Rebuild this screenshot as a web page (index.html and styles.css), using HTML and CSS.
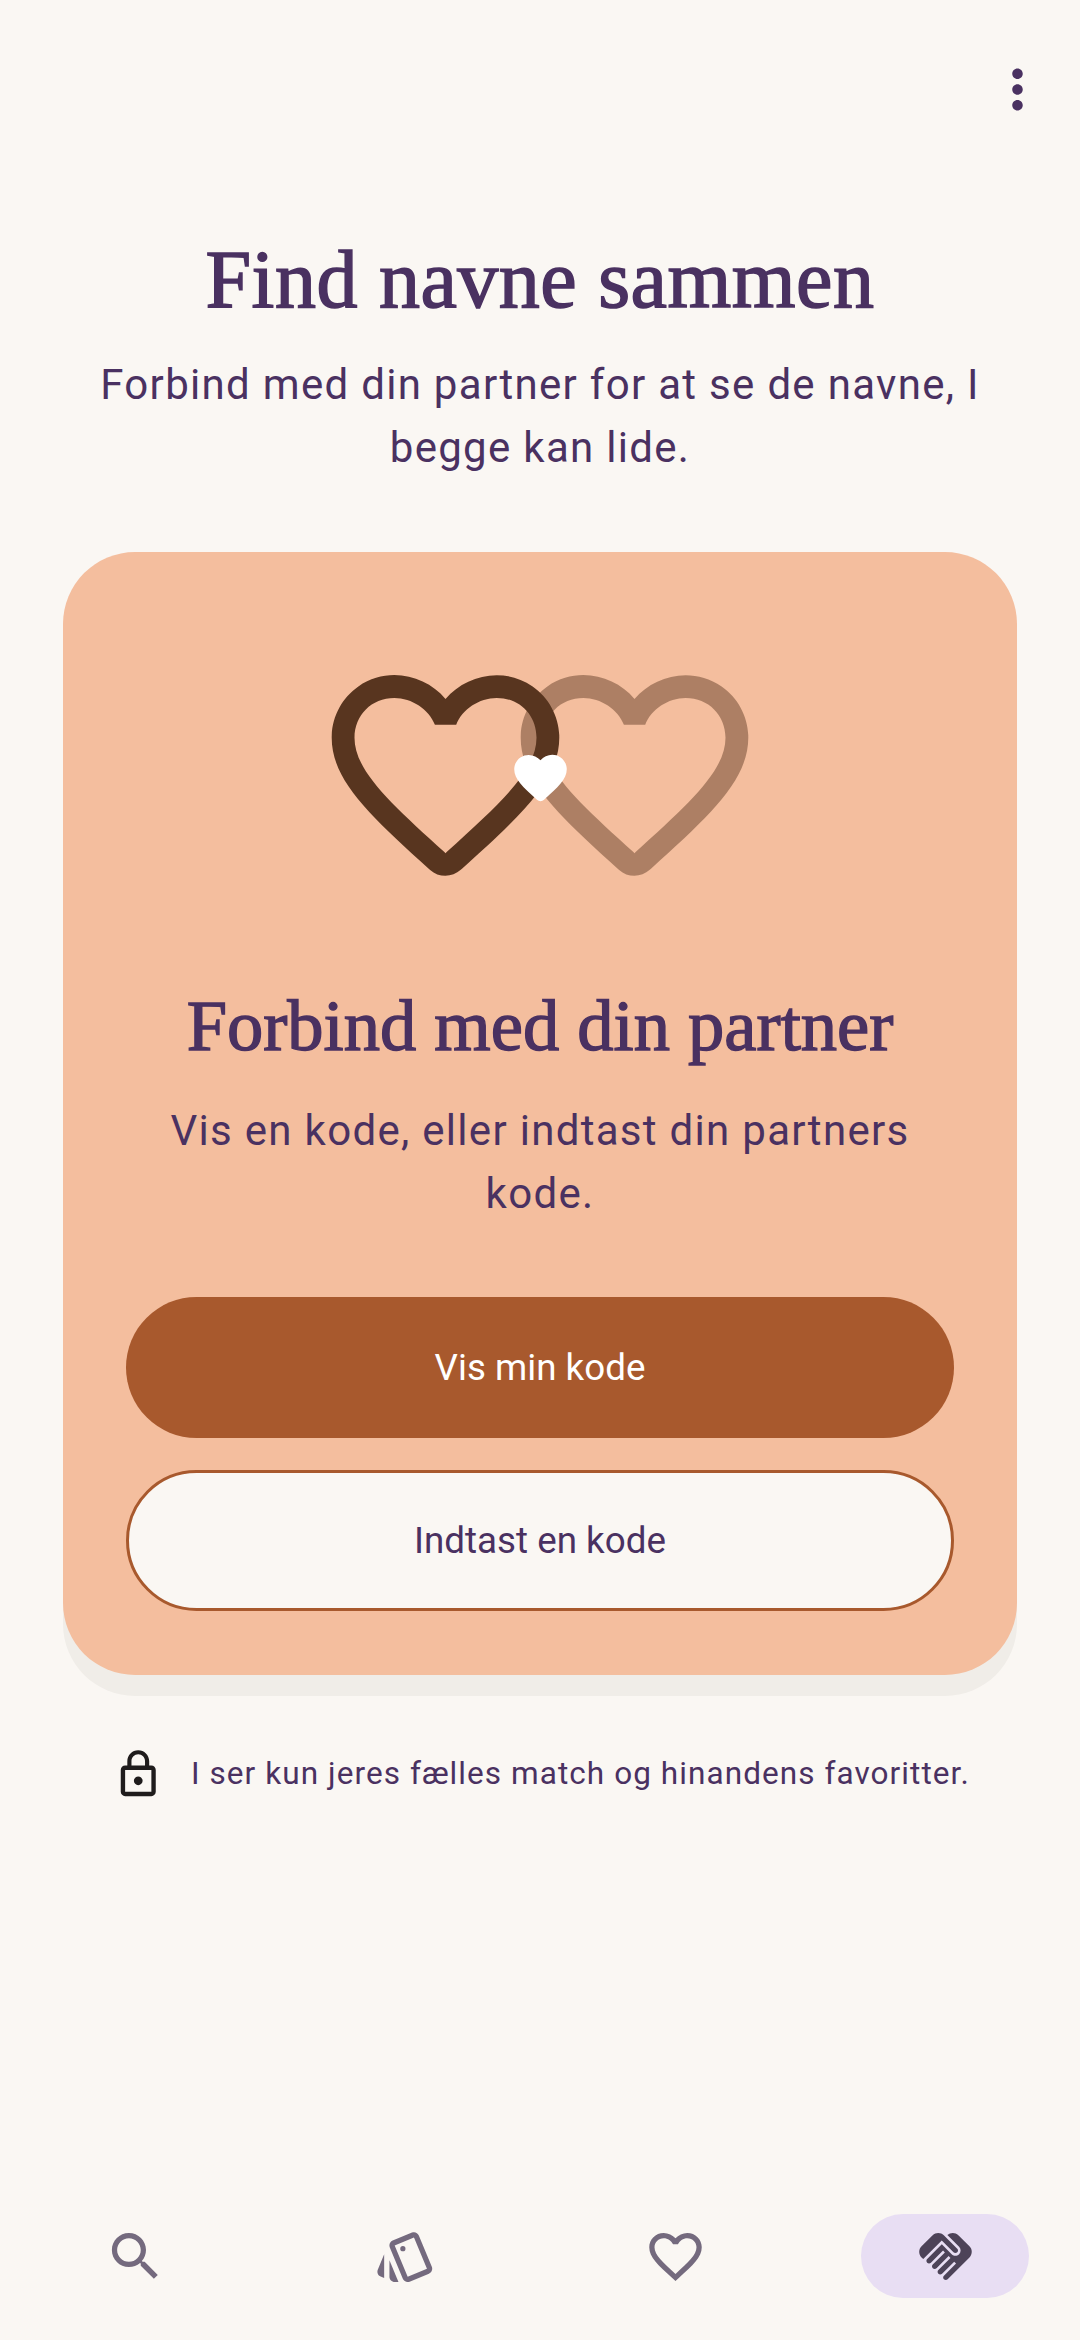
FILE: index.html
```html
<!DOCTYPE html>
<html lang="da">
<head>
<meta charset="utf-8">
<title>Find navne sammen</title>
<link rel="stylesheet" href="styles.css">
</head>
<body>
<div class="page">
  <header class="topbar">
    <svg class="icon-more" viewBox="0 0 24 24"><path d="M12 8c1.1 0 2-.9 2-2s-.9-2-2-2-2 .9-2 2 .9 2 2 2zm0 2c-1.1 0-2 .9-2 2s.9 2 2 2 2-.9 2-2-.9-2-2-2zm0 6c-1.1 0-2 .9-2 2s.9 2 2 2 2-.9 2-2-.9-2-2-2z"/></svg>
  </header>
  <h1 class="title">Find navne sammen</h1>
  <p class="subtitle">Forbind med din partner for at se de navne, I begge kan lide.</p>
  <section class="card">
    <div class="hearts">
      <svg class="heart heart-right" viewBox="0 0 24 24"><path d="M19.66 3.99c-2.64-1.8-5.9-.96-7.66 1.1-1.76-2.06-5.02-2.91-7.66-1.1-1.4.96-2.28 2.58-2.34 4.29-.14 3.88 3.3 6.99 8.55 11.76l.1.09c.76.69 1.93.69 2.69-.01l.11-.1c5.25-4.76 8.68-7.87 8.55-11.75-.06-1.7-.94-3.32-2.34-4.28zM12.1 18.55l-.1.1-.1-.1C7.14 14.24 4 11.39 4 8.5 4 6.5 5.5 5 7.5 5c1.54 0 3.04.99 3.57 2.36h1.87C13.46 5.99 14.96 5 16.5 5c2 0 3.5 1.5 3.5 3.5 0 2.89-3.14 5.74-7.9 10.05z"/></svg>
      <svg class="heart heart-left" viewBox="0 0 24 24"><path d="M19.66 3.99c-2.64-1.8-5.9-.96-7.66 1.1-1.76-2.06-5.02-2.91-7.66-1.1-1.4.96-2.28 2.58-2.34 4.29-.14 3.88 3.3 6.99 8.55 11.76l.1.09c.76.69 1.93.69 2.69-.01l.11-.1c5.25-4.76 8.68-7.87 8.55-11.75-.06-1.7-.94-3.32-2.34-4.28zM12.1 18.55l-.1.1-.1-.1C7.14 14.24 4 11.39 4 8.5 4 6.5 5.5 5 7.5 5c1.54 0 3.04.99 3.57 2.36h1.87C13.46 5.99 14.96 5 16.5 5c2 0 3.5 1.5 3.5 3.5 0 2.89-3.14 5.74-7.9 10.05z"/></svg>
      <svg class="heart-mini" viewBox="0 0 24 24"><path d="M13.35 20.13c-.76.69-1.93.69-2.69-.01l-.11-.1C5.3 15.27 1.87 12.16 2 8.28c.06-1.7.93-3.33 2.34-4.29 2.64-1.8 5.9-.96 7.66 1.1 1.76-2.06 5.02-2.91 7.66-1.1 1.41.96 2.28 2.59 2.34 4.29.14 3.88-3.3 6.99-8.55 11.76l-.1.09z"/></svg>
    </div>
    <h2 class="card-title">Forbind med din partner</h2>
    <p class="card-text">Vis en kode, eller indtast din partners kode.</p>
    <div class="actions">
      <button class="btn btn-primary">Vis min kode</button>
      <button class="btn btn-secondary">Indtast en kode</button>
    </div>
  </section>
  <div class="note">
    <svg class="icon-lock" viewBox="0 0 24 24"><path d="M12 17c1.1 0 2-.9 2-2s-.9-2-2-2-2 .9-2 2 .9 2 2 2zm6-9h-1V6c0-2.76-2.24-5-5-5S7 3.24 7 6v2H6c-1.1 0-2 .9-2 2v10c0 1.1.9 2 2 2h12c1.1 0 2-.9 2-2V10c0-1.1-.9-2-2-2zM8.9 6c0-1.71 1.39-3.1 3.1-3.1s3.1 1.39 3.1 3.1v2H8.9V6zM18 20H6V10h12v10z"/></svg>
    <span class="note-text">I ser kun jeres fælles match og hinandens favoritter.</span>
  </div>
  <nav class="nav">
    <div class="nav-item">
      <svg class="nav-icon" viewBox="0 0 24 24"><path d="M15.5 14h-.79l-.28-.27C15.41 12.59 16 11.11 16 9.5 16 5.91 13.09 3 9.5 3S3 5.91 3 9.5 5.91 16 9.5 16c1.61 0 3.09-.59 4.23-1.57l.27.28v.79l5 4.99L20.49 19l-4.99-5zm-6 0C7.01 14 5 11.99 5 9.5S7.01 5 9.5 5 14 7.01 14 9.5 11.99 14 9.5 14z"/></svg>
    </div>
    <div class="nav-item">
      <svg class="nav-icon" viewBox="0 0 24 24"><path d="M2.53 19.65l1.34.56v-9.03l-2.43 5.86c-.41 1.02.08 2.19 1.09 2.61zm19.5-3.7L17.07 3.98c-.31-.75-1.04-1.21-1.81-1.23-.26 0-.53.04-.79.15L7.1 5.95c-.75.31-1.21 1.03-1.23 1.8-.01.27.04.54.15.8l4.96 11.97c.31.76 1.05 1.22 1.83 1.23.26 0 .52-.05.77-.15l7.36-3.05c1.02-.42 1.51-1.59 1.09-2.6zm-9.2 3.8L7.87 7.79l7.35-3.04h.01l4.95 11.95-7.35 3.05z"/><circle cx="11" cy="9" r="1"/><path d="M5.88 19.75c0 1.1.9 2 2 2h1.45l-3.45-8.34v6.34z"/></svg>
    </div>
    <div class="nav-item">
      <svg class="nav-icon" viewBox="0 0 24 24"><path d="M16.5 3c-1.74 0-3.41.81-4.5 2.09C10.91 3.81 9.24 3 7.5 3 4.42 3 2 5.42 2 8.5c0 3.78 3.4 6.86 8.55 11.54L12 21.35l1.45-1.32C18.6 15.36 22 12.28 22 8.5 22 5.42 19.58 3 16.5 3zm-4.4 15.55l-.1.1-.1-.1C7.14 14.24 4 11.39 4 8.5 4 6.5 5.5 5 7.5 5c1.54 0 3.04.99 3.57 2.36h1.87C13.46 5.99 14.96 5 16.5 5c2 0 3.5 1.5 3.5 3.5 0 2.89-3.14 5.74-7.9 10.05z"/></svg>
    </div>
    <div class="nav-item nav-item-active">
      <svg class="nav-icon nav-icon-active" viewBox="0 0 24 24"><path d="M16.48 10.41c-.39.39-1.04.39-1.43 0l-4.47-4.46-7.05 7.04-.66-.63c-1.17-1.17-1.17-3.07 0-4.24l4.24-4.24c1.17-1.17 3.07-1.17 4.24 0L16.48 9c.39.39.39 1.02 0 1.41zm.7-2.12c.78.78.78 2.05 0 2.83-1.27 1.27-2.61.22-2.83 0l-3.76-3.76-5.57 5.57c-.39.39-.39 1.02 0 1.41.39.39 1.02.39 1.42 0l4.62-4.62.71.71-4.62 4.62c-.39.39-.39 1.02 0 1.41.39.39 1.02.39 1.42 0l4.62-4.62.71.71-4.62 4.62c-.39.39-.39 1.02 0 1.41.39.39 1.02.39 1.41 0l4.62-4.62.71.71-4.62 4.62c-.39.39-.39 1.02 0 1.41.39.39 1.02.39 1.41 0l8.32-8.34c1.17-1.17 1.17-3.07 0-4.24l-4.24-4.24c-1.15-1.15-3.01-1.17-4.18-.06l4.47 4.47z"/></svg>
    </div>
  </nav>
</div>
</body>
</html>
```
FILE: styles.css
```css
* { box-sizing: border-box; }
html, body { margin: 0; padding: 0; }
body { background: #faf7f3; font-family: Roboto, "Liberation Sans", sans-serif; color: #4a3161; }
.page { width: 1080px; height: 2340px; display: flex; flex-direction: column; overflow: hidden; }
.topbar { display: flex; justify-content: flex-end; padding: 58px 31.5px 0 0; }
.icon-more { width: 63px; height: 63px; display: block; fill: #4a3161; }
.title { margin: 109px 0 0; height: 100px; font: 400 82px/100px "Liberation Serif", serif; -webkit-text-stroke: 1.5px #4a3161; letter-spacing: 0.5px; text-align: center; }
.subtitle { margin: 22.5px 63px 0; font-size: 42px; line-height: 63px; letter-spacing: 1.3px; text-align: center; }
.card { margin: 73px 63px 0; padding: 89px 63px 64px; background: #f4be9e; border-radius: 72px; box-shadow: 0 21px 0 #f0ede8; display: flex; flex-direction: column; }
.hearts { position: relative; height: 273px; }
.heart { position: absolute; top: 0; width: 273px; height: 273px; fill: #58351f; }
.heart-left { left: 183px; }
.heart-right { left: 372px; opacity: .45; }
.heart-mini { position: absolute; left: 382.5px; top: 106px; width: 63px; height: 63px; fill: #fff; }
.card-title { margin: 67px 0 0; font: 400 72.5px/90px "Liberation Serif", serif; -webkit-text-stroke: 1.4px #4a3161; text-align: center; }
.card-text { margin: 28.5px 0 0; font-size: 42px; line-height: 63px; letter-spacing: 1.3px; text-align: center; }
.actions { margin-top: 71.5px; display: flex; flex-direction: column; gap: 32px; }
.btn { display: block; width: 100%; height: 141px; border-radius: 71px; font: 400 36.75px Roboto, sans-serif; }
.btn-primary { background: #a8592d; border: 0; color: #fff; }
.btn-secondary { background: #faf7f3; border: 3px solid #a8592d; color: #4a3161; }
.note { margin: 73px 0 0 112px; display: flex; align-items: center; gap: 26.5px; }
.icon-lock { width: 52.5px; height: 52.5px; flex: none; fill: #1f1c1c; }
.note-text { font-size: 31.5px; line-height: 52px; letter-spacing: 1.07px; white-space: nowrap; }
.nav { margin-top: auto; padding: 0 0 42px 51px; display: flex; gap: 102px; }
.nav-item { width: 168px; height: 84px; display: flex; align-items: center; justify-content: center; border-radius: 42px; }
.nav-item-active { background: #e8def3; }
.nav-icon { width: 63px; height: 63px; fill: #746a7e; }
.nav-icon-active { fill: #4d4358; }
```
